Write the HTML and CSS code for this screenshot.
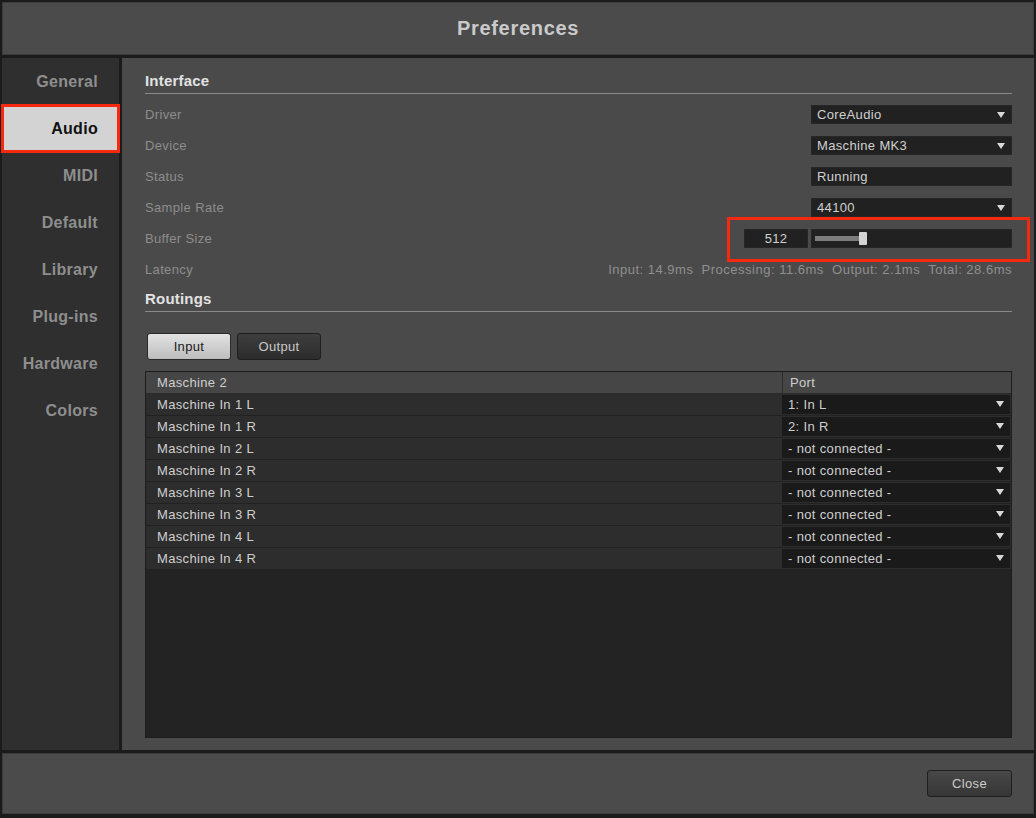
FILE: index.html
```html
<!DOCTYPE html>
<html lang="en">
<head>
<meta charset="utf-8">
<title>Preferences</title>
<link rel="stylesheet" href="styles.css">
</head>
<body>
<div class="window">
  <header class="titlebar">Preferences</header>
  <div class="main">
    <nav class="sidebar">
      <div class="nav-item">General</div>
      <div class="nav-item active">Audio</div>
      <div class="nav-item">MIDI</div>
      <div class="nav-item">Default</div>
      <div class="nav-item">Library</div>
      <div class="nav-item">Plug-ins</div>
      <div class="nav-item">Hardware</div>
      <div class="nav-item">Colors</div>
    </nav>
    <section class="content">
      <h2 class="section-title">Interface</h2>
      <div class="form">
        <div class="form-row">
          <span class="label">Driver</span>
          <div class="select">CoreAudio</div>
        </div>
        <div class="form-row">
          <span class="label">Device</span>
          <div class="select">Maschine MK3</div>
        </div>
        <div class="form-row">
          <span class="label">Status</span>
          <div class="field">Running</div>
        </div>
        <div class="form-row">
          <span class="label">Sample Rate</span>
          <div class="select">44100</div>
        </div>
        <div class="form-row">
          <span class="label">Buffer Size</span>
          <div class="buffer">
            <div class="number">512</div>
            <div class="slider">
              <div class="track"></div>
              <div class="thumb"></div>
            </div>
          </div>
        </div>
        <div class="form-row latency-row">
          <span class="label">Latency</span>
          <span class="latency">Input: 14.9ms&nbsp; Processing: 11.6ms&nbsp; Output: 2.1ms&nbsp; Total: 28.6ms</span>
        </div>
      </div>

      <h2 class="section-title">Routings</h2>
      <div class="tabs">
        <button class="tab tab-on">Input</button>
        <button class="tab">Output</button>
      </div>

      <div class="table">
        <div class="trow thead">
          <div class="cell name">Maschine 2</div>
          <div class="cell port">Port</div>
        </div>
        <div class="trow"><div class="cell name">Maschine In 1 L</div><div class="cell port"><div class="port-select">1: In L</div></div></div>
        <div class="trow"><div class="cell name">Maschine In 1 R</div><div class="cell port"><div class="port-select">2: In R</div></div></div>
        <div class="trow"><div class="cell name">Maschine In 2 L</div><div class="cell port"><div class="port-select">- not connected -</div></div></div>
        <div class="trow"><div class="cell name">Maschine In 2 R</div><div class="cell port"><div class="port-select">- not connected -</div></div></div>
        <div class="trow"><div class="cell name">Maschine In 3 L</div><div class="cell port"><div class="port-select">- not connected -</div></div></div>
        <div class="trow"><div class="cell name">Maschine In 3 R</div><div class="cell port"><div class="port-select">- not connected -</div></div></div>
        <div class="trow"><div class="cell name">Maschine In 4 L</div><div class="cell port"><div class="port-select">- not connected -</div></div></div>
        <div class="trow"><div class="cell name">Maschine In 4 R</div><div class="cell port"><div class="port-select">- not connected -</div></div></div>
      </div>
    </section>
  </div>
  <footer class="footer">
    <button class="close-btn">Close</button>
  </footer>
</div>
</body>
</html>
```

FILE: styles.css
```css
* { box-sizing: border-box; }

html, body {
  margin: 0;
  padding: 0;
  background: #1b1b1b;
}

body {
  font-family: "Liberation Sans", Arial, sans-serif;
  font-size: 13px;
  color: #c8c8c8;
  width: 1036px;
  height: 818px;
  overflow: hidden;
}

.window {
  width: 1036px;
  height: 818px;
  padding: 2px 2px 0 2px;
  display: flex;
  flex-direction: column;
  gap: 3px;
}

.titlebar {
  height: 53px;
  flex: none;
  background: #4b4b4b;
  border: 1px solid #3c3c3c;
  display: flex;
  align-items: center;
  justify-content: center;
  font-size: 20px;
  font-weight: bold;
  letter-spacing: 0.7px;
  color: #cacaca;
}

.main {
  height: 692px;
  flex: none;
  display: flex;
  gap: 3px;
}

.sidebar {
  width: 117px;
  flex: none;
  background: #2f2f2f;
  display: flex;
  flex-direction: column;
}

.nav-item {
  height: 47px;
  flex: none;
  display: flex;
  align-items: center;
  justify-content: flex-end;
  padding-right: 21px;
  padding-top: 1px;
  font-size: 16px;
  font-weight: bold;
  letter-spacing: 0.3px;
  color: #8e8e8e;
}

.nav-item.active {
  background: #d3d3d3;
  color: #111111;
  outline: 3px solid #f6290f;
  outline-offset: -2px;
  position: relative;
  z-index: 2;
}

.content {
  flex: 1;
  background: #4a4a4a;
  padding: 13px 22px 12px 23px;
  display: flex;
  flex-direction: column;
}

.section-title {
  margin: 0;
  font-size: 15px;
  font-weight: bold;
  letter-spacing: 0.2px;
  line-height: 20px;
  color: #e2e2e2;
  padding-bottom: 2px;
  border-bottom: 1px solid #8a8a8a;
}

.form {
  margin-top: 11px;
  display: flex;
  flex-direction: column;
}

.form-row {
  height: 31px;
  display: flex;
  align-items: flex-start;
  justify-content: space-between;
}

.latency-row { height: 29px; }

.label {
  line-height: 19px;
  color: #8d8d8d;
  letter-spacing: 0.35px;
}

.select, .field {
  width: 201px;
  height: 19px;
  background: #212121;
  border: 1px solid #262626;
  color: #d0d0d0;
  line-height: 17px;
  padding-left: 5px;
  letter-spacing: 0.35px;
  position: relative;
}

.select::after,
.port-select::after {
  content: "";
  position: absolute;
  right: 6px;
  top: 6px;
  border-left: 4px solid transparent;
  border-right: 4px solid transparent;
  border-top: 6px solid #d8d8d8;
}

.buffer {
  display: flex;
  gap: 3px;
  position: relative;
}

.buffer::after {
  content: "";
  position: absolute;
  left: -17px;
  right: -18px;
  top: -12px;
  bottom: -14px;
  border: 3px solid #f6290f;
  pointer-events: none;
}

.number {
  width: 64px;
  height: 19px;
  background: #212121;
  border: 1px solid #262626;
  text-align: center;
  line-height: 17px;
  color: #d0d0d0;
  letter-spacing: 0.35px;
}

.slider {
  width: 201px;
  height: 19px;
  background: #212121;
  border: 1px solid #262626;
  display: flex;
  align-items: center;
  padding-left: 3px;
}

.track {
  width: 44px;
  height: 5px;
  background: #7c7c7c;
}

.thumb {
  width: 8px;
  height: 13px;
  background: #d4d4d4;
  border-radius: 1px;
}

.latency {
  line-height: 19px;
  color: #8f8f8f;
  letter-spacing: 0.5px;
}

.tabs {
  margin-top: 21px;
  margin-left: 2px;
  display: flex;
  gap: 6px;
}

.tab {
  width: 84px;
  height: 27px;
  font-family: "Liberation Sans", Arial, sans-serif;
  font-size: 13px;
  letter-spacing: 0.35px;
  border-radius: 3px;
  border: 1px solid #1e1e1e;
  background: linear-gradient(#3e3e3e, #2c2c2c);
  color: #c8c8c8;
  padding: 0;
}

.tab-on {
  background: linear-gradient(#e2e2e2, #bdbdbd);
  color: #1a1a1a;
  border-color: #2a2a2a;
}

.table {
  margin-top: 11px;
  flex: 1;
  background: #232323;
  border: 1px solid #1d1d1d;
  display: flex;
  flex-direction: column;
}

.trow {
  height: 22px;
  flex: none;
  display: grid;
  grid-template-columns: 1fr 229px;
  background: #2d2d2d;
  border-bottom: 1px solid #222222;
}

.thead {
  background: #464646;
  border-bottom: 1px solid #2b2b2b;
}

.cell {
  line-height: 21px;
  letter-spacing: 0.35px;
  color: #cfcfcf;
}

.name { padding-left: 11px; }

.thead .port {
  border-left: 1px solid #2b2b2b;
  padding-left: 7px;
}

.trow:not(.thead) .port {
  padding: 1px 1px 1px 0;
}

.port-select {
  height: 19px;
  background: #1a1a1a;
  line-height: 19px;
  padding-left: 6px;
  position: relative;
  color: #cfcfcf;
}

.footer {
  height: 61px;
  flex: none;
  background: #4b4b4b;
  border: 1px solid #3c3c3c;
  display: flex;
  align-items: center;
  justify-content: flex-end;
  padding-right: 21px;
}

.close-btn {
  width: 85px;
  height: 27px;
  font-family: "Liberation Sans", Arial, sans-serif;
  font-size: 13px;
  letter-spacing: 0.35px;
  color: #cccccc;
  background: linear-gradient(#484848, #363636);
  border: 1px solid #1f1f1f;
  border-radius: 3px;
  padding: 0;
}
```
